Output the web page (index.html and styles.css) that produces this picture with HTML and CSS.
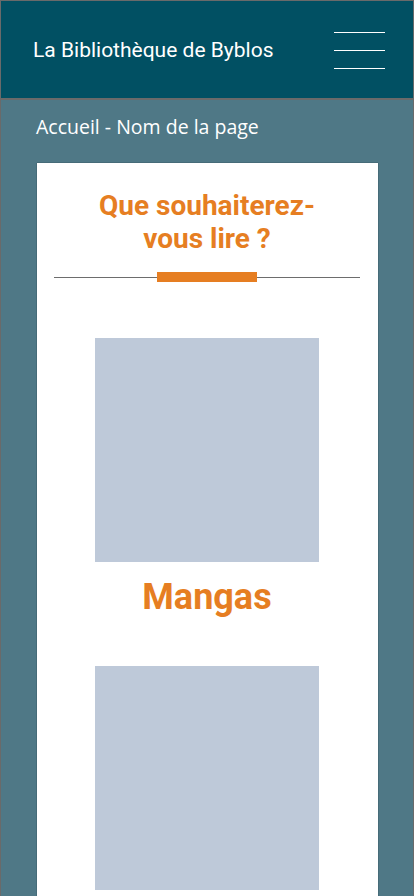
FILE: index.html
```html
<!DOCTYPE html>
<html lang="fr">
<head>
<meta charset="utf-8">
<title>La Bibliothèque de Byblos</title>
<link rel="stylesheet" href="styles.css">
</head>
<body>
<div class="page">
  <header class="header">
    <h1 class="brand">La Bibliothèque de Byblos</h1>
    <button class="burger" aria-label="Menu">
      <span></span><span></span><span></span>
    </button>
  </header>
  <main class="main">
    <p class="crumbs">Accueil - Nom de la page</p>
    <section class="card">
      <h2 class="title">Que souhaiterez-<br>vous lire ?</h2>
      <div class="divider"><span class="divider-bar"></span></div>
      <ul class="cats">
        <li class="cat">
          <div class="cat-img"></div>
          <h3 class="cat-name">Mangas</h3>
        </li>
        <li class="cat">
          <div class="cat-img"></div>
          <h3 class="cat-name">Romans</h3>
        </li>
      </ul>
    </section>
  </main>
</div>
</body>
</html>
```
FILE: styles.css
```css
html, body {
  margin: 0;
  padding: 0;
  height: 100%;
  overflow: hidden;
}
body {
  background: #4f7886;
}
.page {
  box-sizing: border-box;
  min-height: 100vh;
  border: 1px solid #6a6a6a;
  border-bottom: none;
  background: #4f7886;
}
.header {
  height: 97px;
  background: #015063;
  border-bottom: 2px solid #6a6a6a;
  display: flex;
  align-items: center;
  justify-content: space-between;
  padding: 0 28px 0 32px;
}
.brand {
  margin: 0;
  font-family: Roboto, sans-serif;
  font-weight: 400;
  font-size: 21px;
  color: #ffffff;
  letter-spacing: 0;
}
.burger {
  background: none;
  border: none;
  padding: 0;
  width: 51px;
  height: 37px;
  display: flex;
  flex-direction: column;
  justify-content: space-between;
  margin-top: 1px;
}
.burger span {
  display: block;
  height: 1px;
  background: #ffffff;
}
.main {
  padding: 14px 35px 0 36px;
}
.crumbs {
  margin: 0 0 0 -1px;
  height: 36px;
  line-height: 26px;
  font-family: "Open Sans", sans-serif;
  font-size: 19.5px;
  color: #ffffff;
}
.card {
  background: #ffffff;
  box-shadow: 0 0 1px rgba(0,0,0,0.6);
  margin-top: 13px;
  padding: 26px 18px 0 17px;
}
.title {
  margin: 0;
  text-align: center;
  font-family: Roboto, sans-serif;
  font-weight: 700;
  font-size: 28px;
  line-height: 33px;
  color: #e67e22;
}
.divider {
  margin-top: 17px;
  height: 10px;
  display: flex;
  align-items: center;
  justify-content: center;
  background: linear-gradient(#6d6d6d, #6d6d6d) center / 100% 1px no-repeat;
}
.divider-bar {
  width: 100px;
  height: 10px;
  background: #e67e22;
}
.cats {
  list-style: none;
  margin: 0;
  padding: 56px 0 0 0;
  display: flex;
  flex-direction: column;
  align-items: center;
  gap: 46px;
}
.cat {
  display: flex;
  flex-direction: column;
  align-items: center;
}
.cat-img {
  width: 224px;
  height: 224px;
  background: #bec9d9;
}
.cat-name {
  margin: 12px 0 0 0;
  font-family: Roboto, sans-serif;
  font-weight: 700;
  font-size: 36px;
  line-height: 46px;
  color: #e67e22;
}
```
